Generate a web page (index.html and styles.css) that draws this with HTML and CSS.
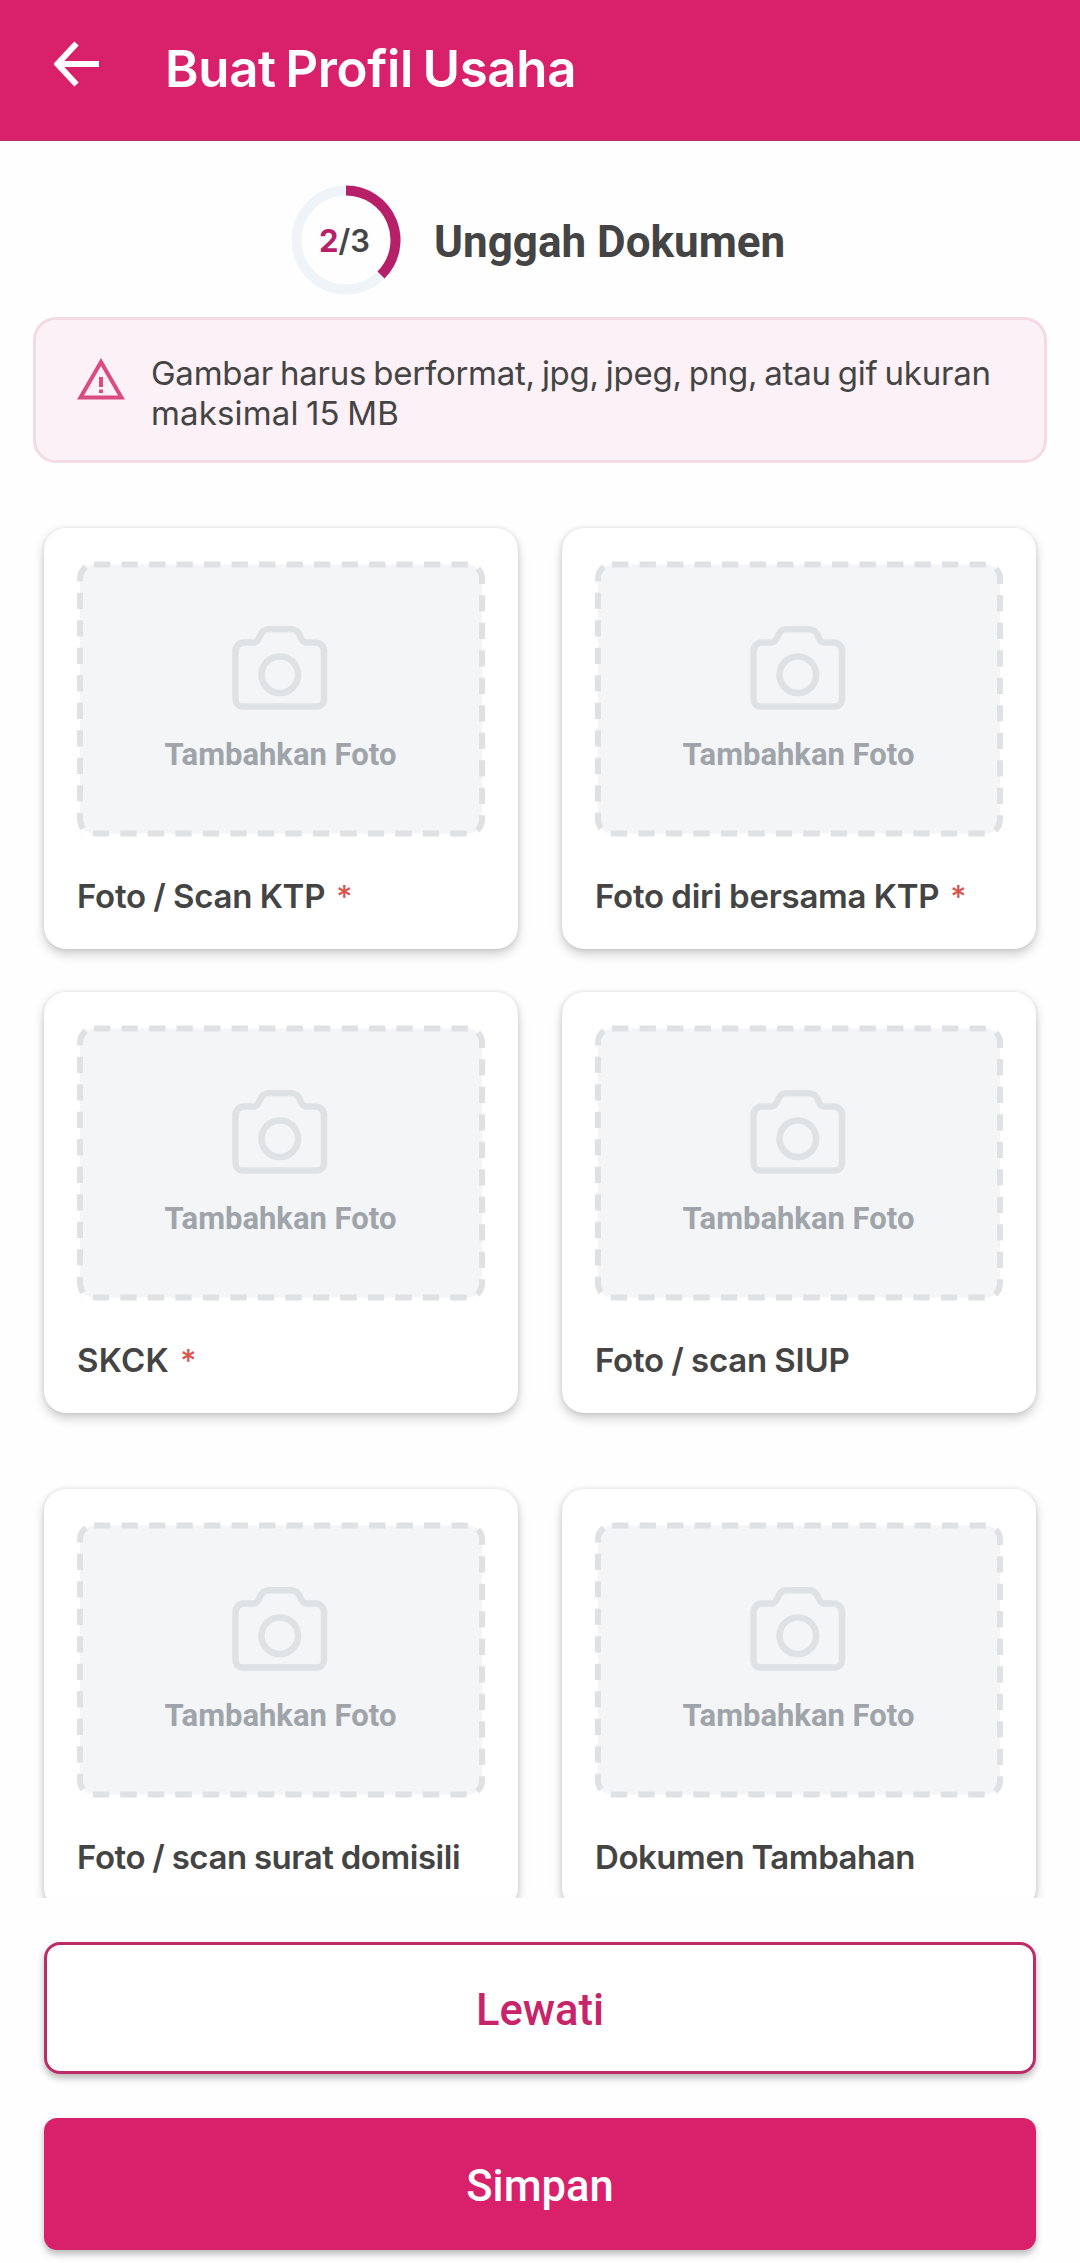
FILE: index.html
```html
<!DOCTYPE html>
<html lang="id">
<head>
<meta charset="utf-8">
<title>Buat Profil Usaha</title>
<link rel="stylesheet" href="styles.css">
</head>
<body>
<svg class="defs" width="0" height="0" aria-hidden="true">
  <symbol id="dropzone" viewBox="0 0 408 276">
    <rect class="zone" x="3" y="3.5" width="402" height="269" rx="14" stroke-dasharray="16.4 11.1"/>
  </symbol>
  <symbol id="camera" viewBox="0 0 96 84">
    <path class="line" d="M11.500 16.500H22C29 16.500 26 3.250 37 3.250H59C70 3.250 67 16.500 74 16.500H83.500A8.500 8.500 0 0 1 92 25V73.500A7 7 0 0 1 85 80.500H10.500A7 7 0 0 1 3.500 73.500V25A8.500 8.500 0 0 1 11.500 16.500Z"/>
    <circle class="line" cx="47.800" cy="48.700" r="18.300"/>
  </symbol>
</svg>
<div class="screen">
  <header class="appbar">
    <svg class="back" width="46" height="46" viewBox="0 0 46 46"><path d="M45 23H4M22.500 2.500L3.500 23L22.500 43.500"/></svg>
    <h1 class="title">Buat Profil Usaha</h1>
  </header>
  <main class="content">
    <div class="step">
      <div class="ring">
        <svg width="110" height="110" viewBox="0 0 110 110"><circle class="track" cx="55" cy="55" r="49.500"/><path class="arc" d="M55 5.500A49.500 49.500 0 0 1 90 90"/></svg>
        <span class="count"><b class="now">2</b>/3</span>
      </div>
      <h2 class="step-title">Unggah Dokumen</h2>
    </div>
    <div class="notice">
      <svg class="warn" width="48" height="42" viewBox="0 0 48 42"><path d="M24 4L44.500 39.500H3.500Z"/><path class="mark" d="M24 19V29M24 31.500V35"/></svg>
      <p class="notice-text">Gambar harus berformat, jpg, jpeg, png, atau gif ukuran<br><span class="limit">maksimal 15 MB</span></p>
    </div>
    <div class="grid">
      <section class="card"><div class="drop"><svg class="border" width="408" height="276"><use href="#dropzone"/></svg><svg class="camera" width="96" height="84"><use href="#camera"/></svg><span class="add">Tambahkan Foto</span></div><p class="label">Foto / Scan KTP<span class="req">*</span></p></section>
      <section class="card"><div class="drop"><svg class="border" width="408" height="276"><use href="#dropzone"/></svg><svg class="camera" width="96" height="84"><use href="#camera"/></svg><span class="add">Tambahkan Foto</span></div><p class="label">Foto diri bersama KTP<span class="req">*</span></p></section>
      <section class="card"><div class="drop"><svg class="border" width="408" height="276"><use href="#dropzone"/></svg><svg class="camera" width="96" height="84"><use href="#camera"/></svg><span class="add">Tambahkan Foto</span></div><p class="label caps">SKCK<span class="req">*</span></p></section>
      <section class="card"><div class="drop"><svg class="border" width="408" height="276"><use href="#dropzone"/></svg><svg class="camera" width="96" height="84"><use href="#camera"/></svg><span class="add">Tambahkan Foto</span></div><p class="label">Foto / scan SIUP</p></section>
    </div>
    <div class="grid grid-extra">
      <section class="card"><div class="drop"><svg class="border" width="408" height="276"><use href="#dropzone"/></svg><svg class="camera" width="96" height="84"><use href="#camera"/></svg><span class="add">Tambahkan Foto</span></div><p class="label">Foto / scan surat domisili</p></section>
      <section class="card"><div class="drop"><svg class="border" width="408" height="276"><use href="#dropzone"/></svg><svg class="camera" width="96" height="84"><use href="#camera"/></svg><span class="add">Tambahkan Foto</span></div><p class="label">Dokumen Tambahan</p></section>
    </div>
  </main>
  <footer class="actions">
    <button class="btn outline">Lewati</button>
    <button class="btn filled">Simpan</button>
  </footer>
</div>
</body>
</html>
```
FILE: styles.css
```css
* { box-sizing: border-box; }
body { margin: 0; background: #fefefe; color: #444; font-family: Inter, "Liberation Sans", sans-serif; }
h1, h2, p { margin: 0; }
svg { display: block; flex: none; fill: none; }
.defs { position: absolute; }
.screen { width: 1080px; height: 2263px; display: flex; flex-direction: column; overflow: hidden; }

.appbar { flex: none; height: 141px; padding: 0 0 0 54px; display: flex; align-items: flex-start; background: #d9206a; border-bottom: 1px solid #b83068; }
.back { margin-top: 41px; stroke: #fff; stroke-width: 6; }
.title { margin: 38px 0 0 65px; color: #fff; font-size: 51px; line-height: 62px; font-weight: 600; letter-spacing: -.35px; word-spacing: -3px; white-space: nowrap; }

.content { flex: none; height: 1757px; overflow: hidden; }
.step { display: flex; padding: 44px 0 0 291px; height: 176px; }
.ring { position: relative; width: 110px; height: 110px; display: flex; align-items: center; justify-content: center; }
.ring svg { position: absolute; inset: 0; }
.track { stroke: #eff4f9; stroke-width: 10; }
.arc { stroke: #b81f69; stroke-width: 10; }
.count { position: relative; margin-right: 3px; padding-top: 1px; font-size: 31px; line-height: 40px; font-weight: 600; }
.now { color: #b81f69; font-weight: 700; }
.step-title { margin: 31px 0 0 33px; font: 700 44px/52px Roboto, sans-serif; white-space: nowrap; }

.notice { display: flex; margin: 0 33px; height: 146px; border: 3px solid #f4dbe3; border-radius: 23px; background: #fbf1f6; padding: 33px 0 0 41px; }
.warn { margin-top: 5px; stroke: #d94c82; stroke-width: 4; }
.warn .mark { stroke-width: 4; }
.notice-text { margin-left: 26px; font-size: 33px; line-height: 40px; font-weight: 400; letter-spacing: -.25px; word-spacing: -2px; white-space: nowrap; }
.limit { letter-spacing: .15px; }

.grid { display: grid; grid-template-columns: 474px 474px; gap: 43px 44px; padding: 65px 44px 0; }
.grid-extra { padding-top: 76px; }
.card { height: 421px; padding: 33px; background: #fff; border-radius: 22px; box-shadow: 0 5px 11px rgba(0,0,0,.2), 0 0 4px rgba(0,0,0,.1); }
.drop { position: relative; width: 408px; height: 276px; display: flex; flex-direction: column; align-items: center; padding-top: 65px; }
.drop > .border { position: absolute; left: 0; top: 0; }
.camera { position: relative; margin-right: 3px; }
.zone { fill: #f3f5f7; stroke: #dfe2e5; stroke-width: 6; }
.line { stroke: #dee2e5; stroke-width: 6.500; stroke-linejoin: round; }
.add { position: relative; margin: 27px 1px 0 0; font: 700 31px/36px Roboto, sans-serif; color: #9fa4aa; white-space: nowrap; }
.label { margin-top: 39px; font-size: 33px; line-height: 40px; font-weight: 600; letter-spacing: -.25px; word-spacing: -.6px; white-space: nowrap; }
.caps { letter-spacing: .3px; }
.grid-extra .label { letter-spacing: -.45px; }
.req { color: #d9534f; font-size: 31px; font-weight: 500; margin-left: 11px; }

.actions { flex: 1; display: flex; flex-direction: column; gap: 44px; padding: 44px 44px 13px; }
.btn { flex: none; height: 132px; padding: 5px 0 0; border: 0; font: 500 43.5px/50px Roboto, sans-serif; box-shadow: 0 4px 7px rgba(0,0,0,.28); }
.outline { border: 3px solid #bd2c69; border-radius: 16px; background: #fff; color: #c72469; }
.filled { border-radius: 13px; background: #d9206a; color: #fff; }
```
